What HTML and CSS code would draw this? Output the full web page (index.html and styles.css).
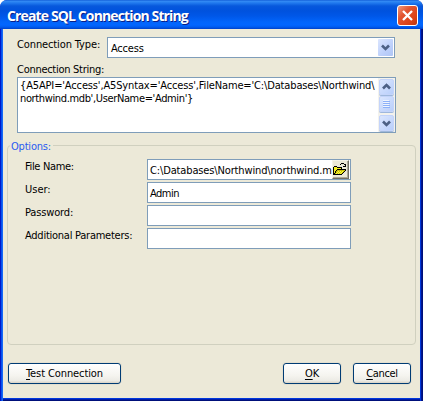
FILE: index.html
```
<!DOCTYPE html>
<html lang="en">
<head>
<meta charset="utf-8">
<title>Create SQL Connection String</title>
<link rel="stylesheet" href="styles.css">
</head>
<body>
<div class="window">
  <header class="titlebar">
    <h1 class="title">Create SQL Connection String</h1>
    <button class="close" aria-label="Close"><svg width="21" height="21" viewBox="0 0 21 21"><path d="M6 6L15 15M15 6L6 15" stroke="#fff" stroke-width="2.3"/></svg></button>
  </header>
  <main class="body">
    <div class="type-row">
      <label class="type-label">Connection Type:</label>
      <div class="select"><span class="access">Access</span>
        <div class="drop"><svg width="15" height="17" viewBox="0 0 15 17"><path d="M4 6.5L7.5 10L11 6.5" fill="none" stroke="#4d6185" stroke-width="2.6"/></svg></div>
      </div>
    </div>
    <label class="string-label">Connection String:</label>
    <div class="textarea">
      <div class="code"><span class="line-one">{A5API='Access',A5Syntax='Access',FileName='C:\Databases\Northwind\</span><br><span class="line-two">northwind.mdb',UserName='Admin'}</span></div>
      <div class="scrollbar">
        <div class="scroll-button"><svg width="15" height="16" viewBox="0 0 15 16"><path d="M4 9.5L7.5 6L11 9.5" fill="none" stroke="#4d6185" stroke-width="2.6"/></svg></div>
        <div class="scroll-button thumb"><svg width="15" height="16" viewBox="0 0 15 16" shape-rendering="crispEdges"><path d="M4 4.5h6M4 6.5h6M4 8.5h6M4 10.5h6" stroke="#eef4fe"/><path d="M4 5.5h7M4 7.5h7M4 9.5h7M4 11.5h7" stroke="#8cb0f8"/></svg></div>
        <div class="scroll-button down"><svg width="15" height="16" viewBox="0 0 15 16"><path d="M4 6.5L7.5 10L11 6.5" fill="none" stroke="#4d6185" stroke-width="2.6"/></svg></div>
      </div>
    </div>
    <section class="group">
      <h2 class="legend">Options:</h2>
      <div class="fields">
        <label class="file-label">File Name:</label>
        <div class="field"><span class="path">C:\Databases\Northwind\northwind.m</span>
          <button class="browse" aria-label="Browse"><svg width="14" height="14" viewBox="0 0 14 14" shape-rendering="crispEdges"><path d="M1 4h3v1h4v2h4v1h-1v1h-1v1h-1v1h-1v1H1z" fill="#f4ec20"/><path d="M4 7h8v1h-1v1h-1v1H9v1H2v-1h1V8h1z" fill="#c9c10c"/><path d="M5 8h1v1H5zM7 8h1v1H7zM9 8h1v1H9zM4 9h1v1H4zM6 9h1v1H6zM8 9h1v1H8zM3 10h1v1H3zM5 10h1v1H5zM7 10h1v1H7z" fill="#ffff38"/><path d="M1 3.5h3M4 4.5h5M.5 4v8M8.5 5v2M4 6.5h9M3.5 7v1M2.5 8v2M1.5 10v2M1 11.5h8M9.5 10v1M10.5 9v1M11.5 8v1M12.5 7v1M7 1.5h1M8 .5h3M11 1.5h1M12.5 1v3M10 3.5h3" stroke="#000" fill="none"/></svg></button>
        </div>
        <label>User:</label><div class="field"><span class="admin">Admin</span></div>
        <label class="password-label">Password:</label><div class="field"></div>
        <label class="params-label">Additional Parameters:</label><div class="field"></div>
      </div>
    </section>
    <footer class="actions">
      <button class="btn test"><span><u>T</u>est Connection</span></button>
      <button class="btn"><span><u>O</u>K</span></button>
      <button class="btn cancel"><span><u>C</u>ancel</span></button>
    </footer>
  </main>
</div>
</body>
</html>
```
FILE: styles.css
```
* { box-sizing: border-box; }
body { margin: 0; background: #fff; font: 11px/13px "DejaVu Sans Condensed", "DejaVu Sans", sans-serif; font-stretch: condensed; color: #000; overflow: hidden; white-space: nowrap; }
button { font: inherit; color: inherit; padding: 0; margin: 0; }
svg { display: block; }
.window { width: 423px; height: 401px; border-radius: 7px 7px 0 0; overflow: hidden; background: linear-gradient(90deg, #0018c8 0 1px, #0650ee 1px 2px, #1668f5 2px 3px, #0038dc 3px 421px, #001590 421px 422px, #00107a 422px); display: flex; flex-direction: column; }
.titlebar { height: 29px; flex: none; display: flex; justify-content: space-between; padding: 5px 5px 0 7px; background: linear-gradient(#0851d0 0, #368df5 1px, #2079ee 3px, #0758dc 6px, #0052de 11px, #0057e8 16px, #0265fb 22px, #0266ff 25px, #005cf0 27px, #0041c9 29px); }
.title { margin: 3px 0 0; font: bold 14px/16px "Open Sans", "Noto Sans", sans-serif; font-stretch: normal; color: #fff; letter-spacing: -.87px; text-shadow: 1px 1px 0 #0b1f87; }
.close { width: 21px; height: 21px; border: 1px solid #fff; border-radius: 3px; background: linear-gradient(135deg, #f09a7e, #e25632 35%, #dc4115 75%, #b9360e); }
.close svg { margin: -1px; }
.body { margin: 0 3px 3px; height: 369px; background: #ece9d8; padding: 8px 4px 0; box-shadow: 0 1px #0038dc, 0 2px #001ca8, 0 3px #00107a; }
.type-row { display: flex; height: 21px; padding-left: 10px; }
.type-label { width: 90px; padding-top: 1px; letter-spacing: -.12px; }
.select { display: flex; justify-content: space-between; width: 288px; height: 21px; border: 1px solid #7f9db9; background: #fff; padding: 1px; }
.access { padding: 3px 0 0 2px; letter-spacing: -.2px; }
.drop { width: 15px; height: 17px; border-radius: 1px; background: linear-gradient(135deg, #dce6fe, #bdd0fb 60%, #afc5f4); }
.string-label { display: block; height: 15px; margin: 4px 0 0 10px; padding-top: 1px; letter-spacing: -.28px; }
.textarea { display: flex; justify-content: space-between; width: 379px; height: 56px; margin: 0 0 0 10px; border: 1px solid #7f9db9; background: #fff; }
.code { width: 360px; padding: 1px 0 0 2px; }
.line-one { letter-spacing: -.145px; }
.line-two { letter-spacing: -.36px; }
.scrollbar { width: 17px; flex: none; height: 54px; background: #f3f2ed; padding: 1px; display: flex; flex-direction: column; }
.scroll-button { width: 15px; height: 16px; border: 1px solid #c4d4fa; border-radius: 2px; background: linear-gradient(135deg, #dbe6fe, #b9cffb); box-shadow: 0 1px #9fb8dc; }
.scroll-button svg { margin: -1px; }
.thumb { margin-top: 1px; }
.down { margin-top: auto; }
.group { width: 409px; height: 200px; margin-top: 12px; border: 1px solid #d0d0bf; border-radius: 4px; }
.legend { width: 43px; height: 13px; margin: -6px 0 0 2px; padding-left: 1px; background: #ece9d8; color: #2a5bf0; font-size: 11px; font-weight: normal; letter-spacing: -.2px; }
.fields { display: grid; grid-template-columns: 122px 204px; grid-auto-rows: 21px; row-gap: 2px; margin: 6px 0 0 17px; }
.fields label { height: 14px; padding-top: 1px; }
.file-label { letter-spacing: -.35px; }
.password-label { letter-spacing: -.15px; }
.params-label { letter-spacing: -.25px; }
.field { display: flex; justify-content: space-between; border: 1px solid #7f9db9; background: #fff; padding: 0 1px 0 2px; }
.field span { margin-top: 4px; }
.path { width: 182px; letter-spacing: -.14px; }
.admin { letter-spacing: -.5px; }
.browse { width: 17px; height: 19px; flex: none; border: 1px solid; border-color: #f5f3e8 #716f64 #716f64 #f5f3e8; background: #ece9d8; box-shadow: inset -1px -1px #aca899; }
.browse svg { margin: 0; }
.actions { display: flex; margin: 18px 0 0 1px; }
.btn { width: 58px; height: 21px; border: 1px solid #003c74; border-radius: 3px; background: linear-gradient(#fff, #f5f4ef 60%, #ecebe5 88%, #d8d2c5); box-shadow: 0 0 0 1px #e4e0d0, 1px 1px #f7f5ed; }
.btn u { text-decoration-thickness: 1px; text-underline-offset: 2px; text-decoration-skip-ink: none; }
.btn span { letter-spacing: -.1px; }
.test { width: 113px; margin-right: 162px; }
.cancel { margin-left: 12px; }
.cancel span { letter-spacing: -.35px; }
```
